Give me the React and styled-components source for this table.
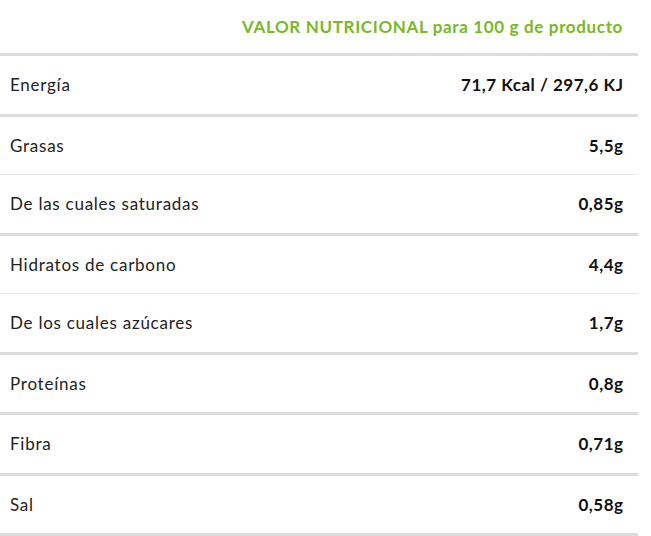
import React from "react";
import styled, { createGlobalStyle } from "styled-components";

const Global = createGlobalStyle`
  html, body { margin: 0; padding: 0; background: #fff; }
  body { font-family: "Lato", "Open Sans", sans-serif; }
`;

const Table = styled.div`
  width: 638px;
  display: flex;
  flex-direction: column;
`;

const Header = styled.div`
  height: 53px;
  display: flex;
  align-items: center;
  justify-content: flex-end;
  padding-right: 15px;
  border-bottom: 3px solid #dddddd;
  color: #79b829;
  font-weight: 700;
  font-size: 17px;
  letter-spacing: 0.65px;
`;

const Row = styled.div`
  height: 57.5px;
  display: flex;
  align-items: center;
  justify-content: space-between;
  padding: 0 15px 0 10px;
  border-bottom: ${(p) => (p.$thin ? "1px solid #e6e6e6" : "3px solid #dddddd")};
`;

const Label = styled.span`
  font-size: 17px;
  letter-spacing: 0.75px;
  color: #222;
  font-weight: 400;
`;

const Value = styled.span`
  font-size: 17px;
  letter-spacing: 0.5px;
  margin-right: -0.5px;
  color: #111;
  font-weight: 700;
`;

const rows = [
  ["Energía", "71,7 Kcal / 297,6 KJ", false],
  ["Grasas", "5,5g", true],
  ["De las cuales saturadas", "0,85g", false],
  ["Hidratos de carbono", "4,4g", true],
  ["De los cuales azúcares", "1,7g", false],
  ["Proteínas", "0,8g", false],
  ["Fibra", "0,71g", false],
  ["Sal", "0,58g", false],
];

export default function App() {
  return (
    <>
      <Global />
      <Table>
        <Header>VALOR NUTRICIONAL para 100 g de producto</Header>
        {rows.map(([l, v, thin]) => (
          <Row key={l} $thin={thin}>
            <Label>{l}</Label>
            <Value>{v}</Value>
          </Row>
        ))}
      </Table>
    </>
  );
}
